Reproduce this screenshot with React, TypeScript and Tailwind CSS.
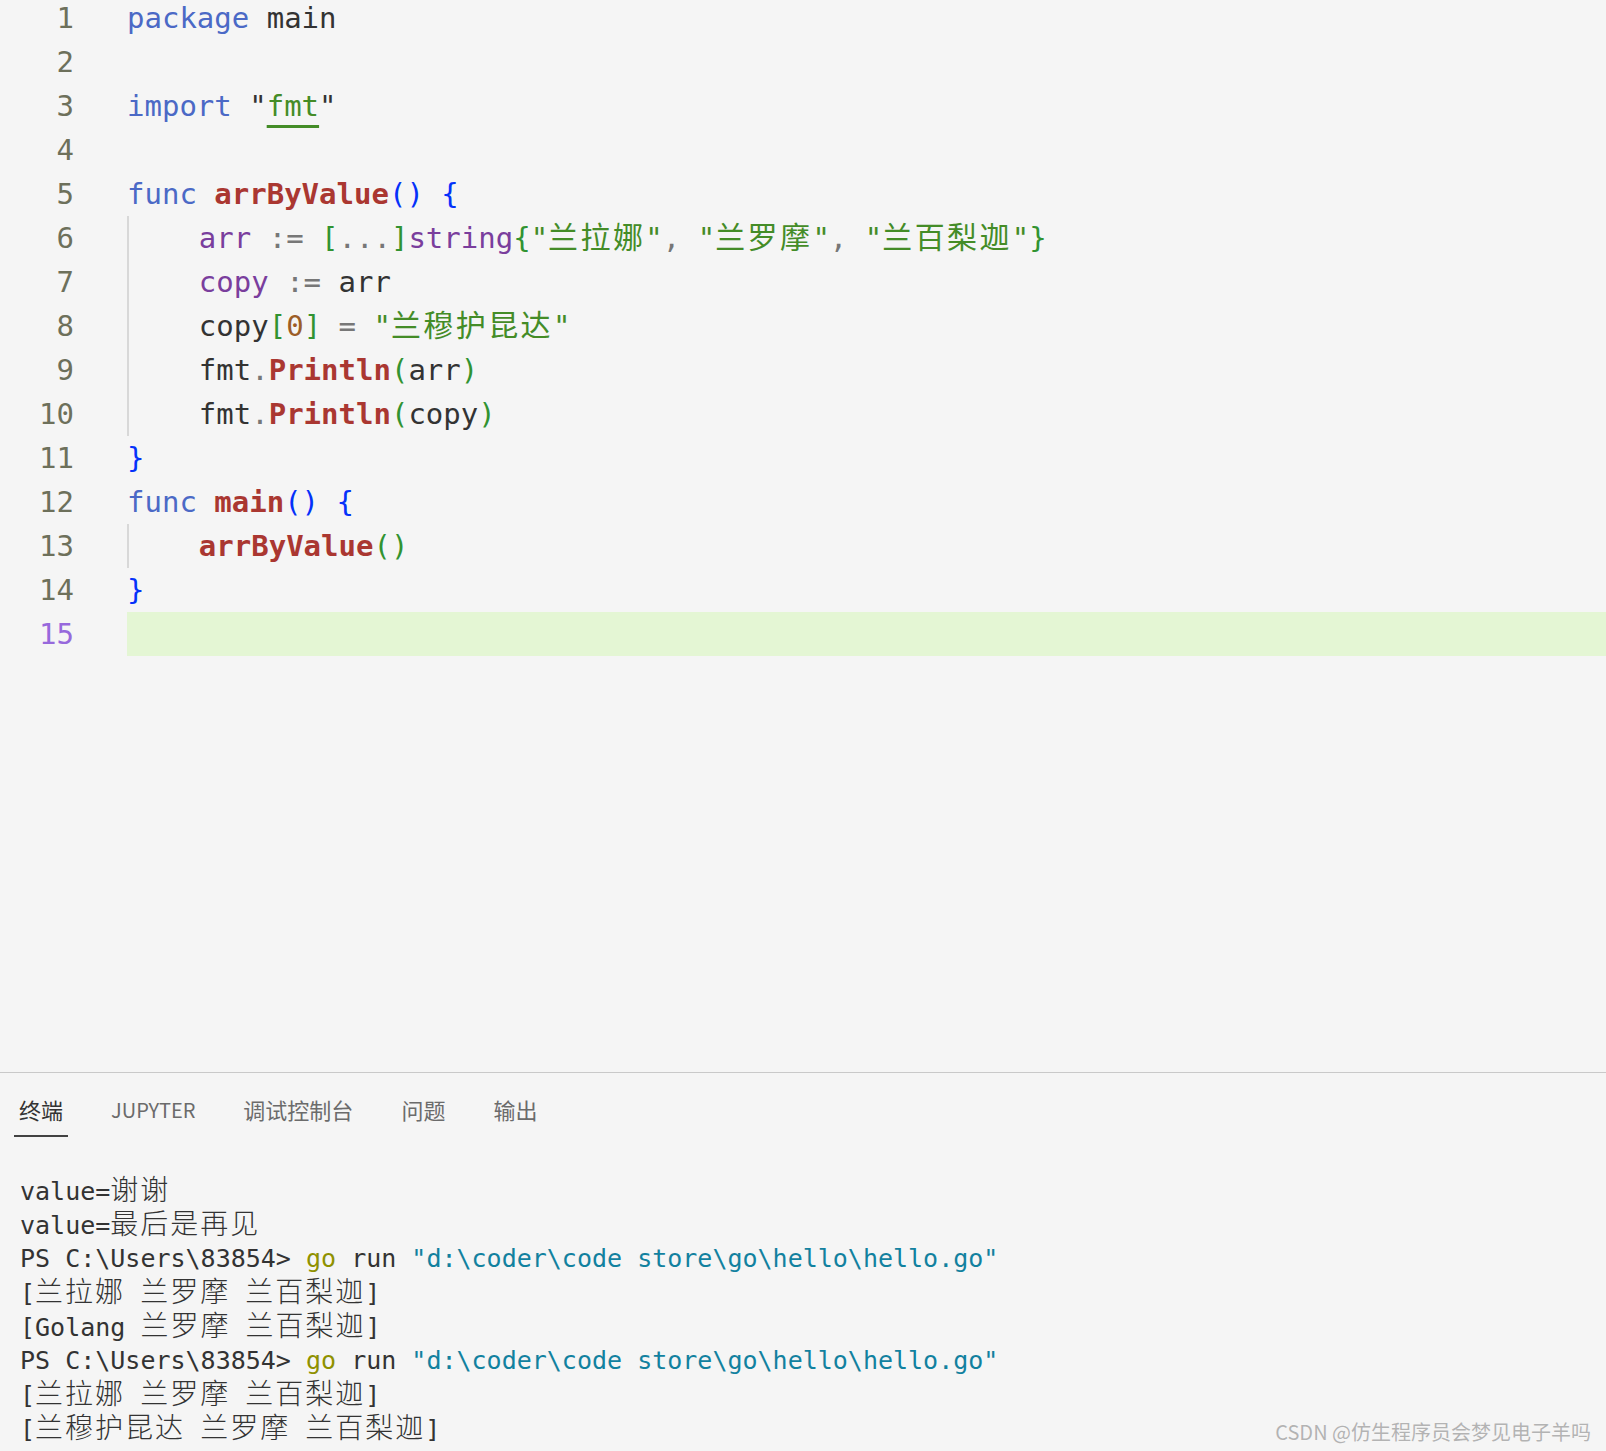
import React from "react";

type Tok = [string, string];

const KW = "text-[#4b69c6]";
const FN = "text-[#aa3731] font-bold";
const B1 = "text-[#0431fa]";
const B2 = "text-[#319331]";
const VAR = "text-[#7a3e9d]";
const STR = "text-[#448c27]";
const OP = "text-[#777777]";
const NUM = "text-[#9c5d27]";
const TXT = "text-[#333333]";

const cjkRe = /([\u3400-\u9fff]+)/;

function Piece({ text, cls }: { text: string; cls: string }) {
  const parts = text.split(cjkRe).filter((p) => p !== "");
  return (
    <span className={cls}>
      {parts.map((p, i) =>
        cjkRe.test(p) ? (
          <span key={i} className="font-['Noto_Sans_CJK_SC',sans-serif] text-[30px] leading-none tracking-[2.4px]">
            {p}
          </span>
        ) : (
          <React.Fragment key={i}>{p}</React.Fragment>
        )
      )}
    </span>
  );
}

const lines: { toks: Tok[]; indent?: boolean }[] = [
  { toks: [[KW, "package"], [TXT, " main"]] },
  { toks: [] },
  { toks: [[KW, "import"], [TXT, " \""], ["FMT", "fmt"], [TXT, "\""]] },
  { toks: [] },
  { toks: [[KW, "func"], [TXT, " "], [FN, "arrByValue"], [B1, "()"], [TXT, " "], [B1, "{"]] },
  {
    indent: true,
    toks: [
      [VAR, "arr"], [OP, " := "], [B2, "["], [OP, "..."], [B2, "]"], [VAR, "string"], [B2, "{"],
      [STR, "\"兰拉娜\""], [OP, ", "], [STR, "\"兰罗摩\""], [OP, ", "], [STR, "\"兰百梨迦\""], [B2, "}"],
    ],
  },
  { indent: true, toks: [[VAR, "copy"], [OP, " := "], [TXT, "arr"]] },
  { indent: true, toks: [[TXT, "copy"], [B2, "["], [NUM, "0"], [B2, "]"], [OP, " = "], [STR, "\"兰穆护昆达\""]] },
  { indent: true, toks: [[TXT, "fmt"], [OP, "."], [FN, "Println"], [B2, "("], [TXT, "arr"], [B2, ")"]] },
  { indent: true, toks: [[TXT, "fmt"], [OP, "."], [FN, "Println"], [B2, "("], [TXT, "copy"], [B2, ")"]] },
  { toks: [[B1, "}"]] },
  { toks: [[KW, "func"], [TXT, " "], [FN, "main"], [B1, "()"], [TXT, " "], [B1, "{"]] },
  { indent: true, toks: [[FN, "arrByValue"], [B2, "()"]] },
  { toks: [[B1, "}"]] },
  { toks: [] },
];

const tabs = ["终端", "JUPYTER", "调试控制台", "问题", "输出"];

type TPart = [string, string];
const GO = "text-[#8f9100]";
const PATH = "text-[#12819f]";
const prompt: TPart[] = [
  ["", "PS C:\\Users\\83854> "],
  [GO, "go"],
  ["", " run "],
  [PATH, "\"d:\\coder\\code store\\go\\hello\\hello.go\""],
];
const term: TPart[][] = [
  [["", "value=谢谢"]],
  [["", "value=最后是再见"]],
  prompt,
  [["", "[兰拉娜 兰罗摩 兰百梨迦]"]],
  [["", "[Golang 兰罗摩 兰百梨迦]"]],
  prompt,
  [["", "[兰拉娜 兰罗摩 兰百梨迦]"]],
  [["", "[兰穆护昆达 兰罗摩 兰百梨迦]"]],
];

function TermPiece({ text, cls }: { text: string; cls: string }) {
  const parts = text.split(cjkRe).filter((p) => p !== "");
  return (
    <span className={cls}>
      {parts.map((p, i) =>
        cjkRe.test(p) ? (
          <span key={i} className="font-['Noto_Sans_CJK_SC',sans-serif] font-light text-[28px] leading-none tracking-[2px]">
            {p}
          </span>
        ) : (
          <React.Fragment key={i}>{p}</React.Fragment>
        )
      )}
    </span>
  );
}

export default function App() {
  return (
    <div className="relative w-[1606px] h-[1451px] overflow-hidden bg-[#f5f5f5] flex flex-col">
      {/* editor */}
      <div className="h-[1072px] shrink-0 overflow-hidden font-['DejaVu_Sans_Mono','Noto_Sans_CJK_SC',monospace] text-[29px] text-[#333333]">
        <div className="-mt-[4px]">
          {lines.map((ln, i) => {
            const current = i === lines.length - 1;
            return (
              <div key={i} className="flex h-[44px] items-center">
                <div
                  className={
                    "w-[74px] shrink-0 text-right leading-[44px] " +
                    (current ? "text-[#9769dc]" : "text-[#6d705b]")
                  }
                >
                  {i + 1}
                </div>
                <div
                  className={
                    "ml-[53px] flex-1 h-full flex items-center whitespace-pre leading-[44px] " +
                    (current ? "bg-[#e4f6d4] " : "") +
                    (ln.indent ? "border-l-2 border-[#d8d8d8]" : "")
                  }
                >
                  {ln.indent && <span>{"    "}</span>}
                  {ln.toks.map(([cls, t], j) =>
                    cls === "FMT" ? (
                      <span
                        key={j}
                        className="text-[#448c27] underline decoration-[#448c27] decoration-[3px] underline-offset-[9px]"
                      >
                        {t}
                      </span>
                    ) : (
                      <Piece key={j} text={t} cls={cls} />
                    )
                  )}
                </div>
              </div>
            );
          })}
        </div>
      </div>

      {/* panel */}
      <div className="flex-1 border-t border-[#c9c9c9]">
        <div className="flex pl-[14px] pt-[21px] gap-[38px] font-['Noto_Sans_CJK_SC','Noto_Sans',sans-serif] text-[22px]">
          {tabs.map((t, i) => (
            <div key={t} className="flex flex-col">
              <div
                className={
                  "px-[5px] leading-[30px] " +
                  (i === 0 ? "text-[#333333]" : "text-[#6b6b6b]") +
                  (t === "JUPYTER" ? " text-[20px] pt-[1px]" : "")
                }
              >
                {t}
              </div>
              <div className={"mt-[11px] h-[2px] " + (i === 0 ? "bg-[#424242]" : "bg-transparent")} />
            </div>
          ))}
        </div>

        <div className="mt-[36px] pl-[20px] font-['DejaVu_Sans_Mono','Noto_Sans_CJK_SC',monospace] text-[25px] text-[#333333]">
          {term.map((row, i) => (
            <div key={i} className="h-[34px] leading-[34px] whitespace-pre">
              {row.map(([cls, t], j) => (
                <TermPiece key={j} text={t} cls={cls} />
              ))}
            </div>
          ))}
        </div>
      </div>

      <div className="absolute right-[15px] bottom-[6px] font-['Noto_Sans_CJK_SC','Liberation_Sans',sans-serif] text-[20px] leading-[26px] text-[#b3b3b3] [text-shadow:0_0_1px_#ffffff]">
        CSDN @仿生程序员会梦见电子羊吗
      </div>
    </div>
  );
}
